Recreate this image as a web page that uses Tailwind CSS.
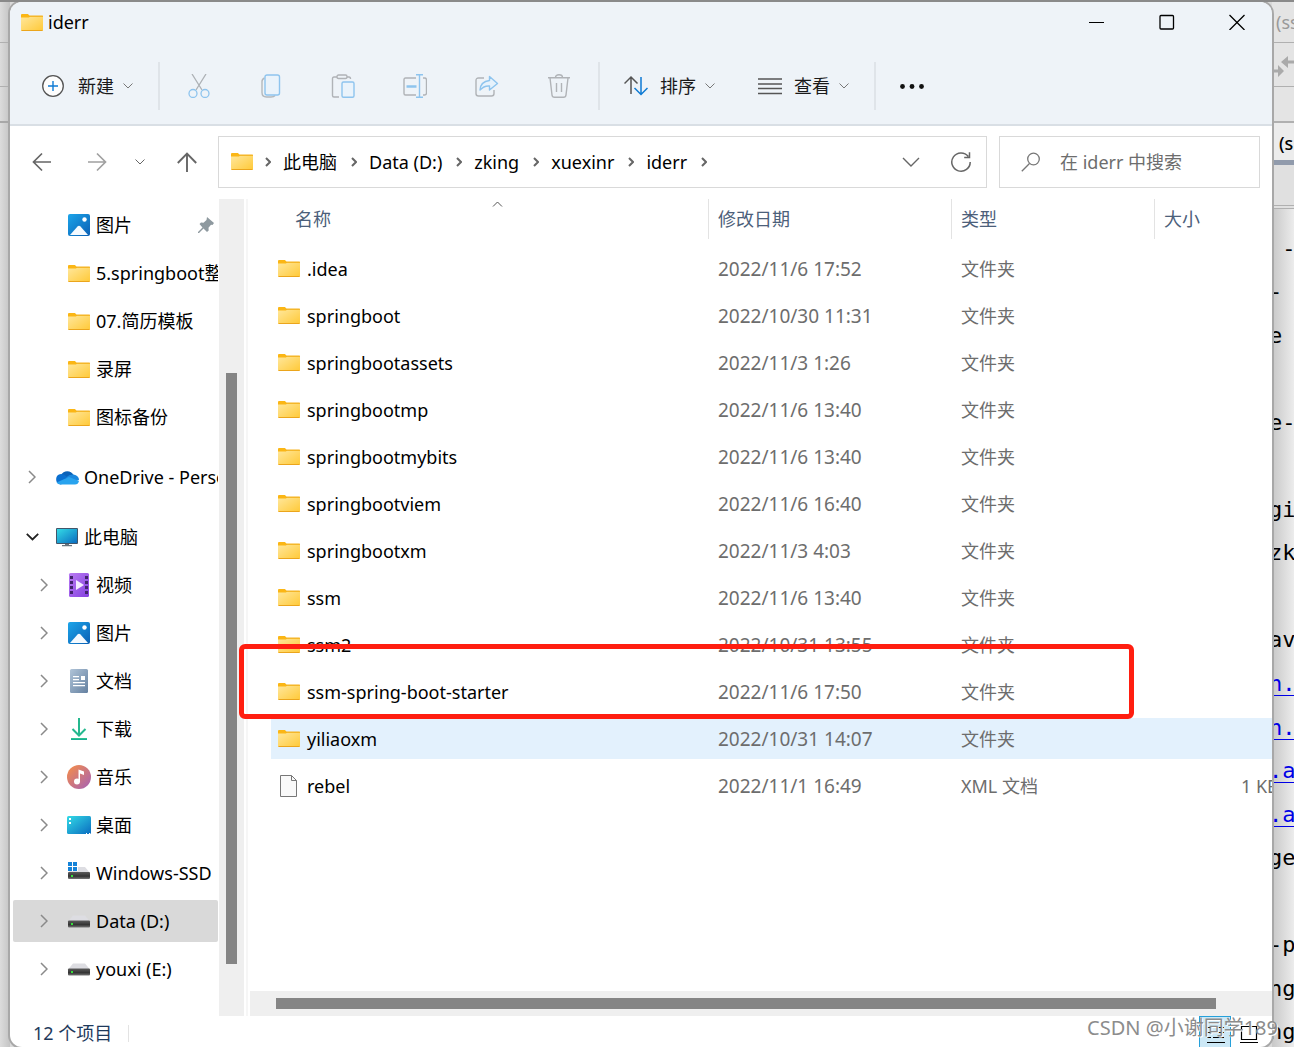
<!DOCTYPE html>
<html lang="zh-CN">
<head>
<meta charset="utf-8">
<meta name="viewport" content="width=device-width, initial-scale=1">
<title>iderr</title>
<script src="https://cdn.jsdelivr.net/npm/@tailwindcss/browser@4"></script>
</head>
<body class="relative flex min-h-screen overflow-hidden border-t-2 border-[#8a8a8a] bg-[#d9d9d9] font-['Noto_Sans','Noto_Sans_CJK_SC',sans-serif] text-lg leading-6 text-black">

<svg class="absolute size-0" aria-hidden="true">
  <defs>
    <linearGradient id="gFolder" x1="0" y1="0" x2="1" y2="1"><stop offset="0" stop-color="#ffe79c"/><stop offset="1" stop-color="#ffc937"/></linearGradient>
    <linearGradient id="gBlue" x1="0" y1="0" x2="1" y2="1"><stop offset="0" stop-color="#1ca5ea"/><stop offset="1" stop-color="#0a5fb4"/></linearGradient>
    <linearGradient id="gScreen" x1="0" y1="0" x2="1" y2="1"><stop offset="0" stop-color="#33dbe6"/><stop offset="1" stop-color="#0a6cc0"/></linearGradient>
    <linearGradient id="gPurple" x1="0" y1="0" x2="1" y2="1"><stop offset="0" stop-color="#b97bf2"/><stop offset="1" stop-color="#8440e0"/></linearGradient>
    <linearGradient id="gDoc" x1="0" y1="0" x2="1" y2="1"><stop offset="0" stop-color="#b0c4d8"/><stop offset="1" stop-color="#6480a0"/></linearGradient>
    <linearGradient id="gMusic" x1="0" y1="0" x2="1" y2="1"><stop offset="0.1" stop-color="#f08a50"/><stop offset="1" stop-color="#a460b8"/></linearGradient>
    <linearGradient id="gDown" x1="0" y1="0" x2="0" y2="1"><stop offset="0" stop-color="#35cf8c"/><stop offset="1" stop-color="#12a095"/></linearGradient>
    <linearGradient id="gDisk" x1="0" y1="0" x2="0" y2="1"><stop offset="0" stop-color="#5c5c5c"/><stop offset="0.6" stop-color="#333"/><stop offset="1" stop-color="#777"/></linearGradient>
  </defs>
  <symbol id="folder" viewBox="0 0 22 17"><path d="M0 1q0-1 1-1h6l1.500 1.700H21q1 0 1 1V5H0z" fill="#fbb615"/><path d="M0 3.600h8L9 2.500h13V16q0 1-1 1H1q-1 0-1-1z" fill="url(#gFolder)"/><path d="M8 2.200h14" stroke="#f0ae1e"/><path d="M.5 16.500h21" stroke="#eba51c"/></symbol>
  <symbol id="picture" viewBox="0 0 24 24"><rect x="1" y="1" width="22" height="22" rx="2" fill="url(#gBlue)"/><circle cx="17.500" cy="6.500" r="2.200" fill="#fff"/><path d="M3 22l7.500-8.500q1.500-1.500 3 0L21 22z" fill="#f4faff"/></symbol>
  <symbol id="cloud" viewBox="0 0 24 24"><path d="M6 10a7 7 0 0 1 12.500 0L13 14z" fill="#0b62b8"/><path d="M5.500 19.500A5.300 5.300 0 0 1 6 9q3 0 5 2l6 5z" fill="#0a6fd0"/><path d="M11 12.500q3-3.200 7.500-3 5.500 1 5.500 5.500l-6 2z" fill="#1a87dd"/><path d="M1.500 17.500L14 12l10 4q-.8 3.500-4 3.500H5.500q-2.500 0-4-2z" fill="#28a3ee"/></symbol>
  <symbol id="computer" viewBox="0 0 24 24"><path d="M10 18h4v2h3v1.300H7V20h3z" fill="#68747e"/><rect x="1" y="3" width="22" height="16" rx="1" fill="#41566b"/><rect x="2" y="4" width="20" height="14" fill="url(#gScreen)"/></symbol>
  <symbol id="video" viewBox="0 0 24 24"><rect x="2" y="0" width="20" height="24" rx="1.500" fill="url(#gPurple)"/><path d="M4.500 3v19M19.500 3v19" stroke="#42246c" stroke-width="3" stroke-dasharray="3 2"/><path d="M9 7l8 5-8 5z" fill="#f4ecff"/></symbol>
  <symbol id="document" viewBox="0 0 24 24"><rect x="3" y="0" width="18" height="24" rx="1.500" fill="url(#gDoc)"/><path d="M6 7.700h6M6 10.700h6M6 13.700h12M6 16.700h12" stroke="#fff" stroke-width="1.200"/><path d="M14 7h4v4h-4z" fill="#fff"/></symbol>
  <symbol id="download" viewBox="0 0 24 24"><path d="M12 1v17M5.500 12l6.500 6.500 6.500-6.500" fill="none" stroke="#25b88e" stroke-width="2"/><path d="M4 21h16v2H4z" fill="url(#gDown)"/></symbol>
  <symbol id="music" viewBox="0 0 24 24"><circle cx="12" cy="12" r="12" fill="url(#gMusic)"/><circle cx="10" cy="16.500" r="3" fill="#fff"/><path d="M11.500 17V4.500l5.500 2V10l-4-1.500V17z" fill="#fff"/></symbol>
  <symbol id="desktop" viewBox="0 0 24 24"><rect x="0" y="3" width="24" height="18" rx="1.500" fill="url(#gScreen)"/><path d="M2 5h2v2H2zM2 9h2v2H2z" fill="#fff"/><path d="M19 20.500h1M22 20.500h1" stroke="#fff"/></symbol>
  <symbol id="disk" viewBox="0 0 24 24"><path d="M6 6.500h12l5 6H1z" fill="#dddde2"/><rect x="1" y="11.500" width="22" height="7" rx="1" fill="url(#gDisk)"/><path d="M4 14h2v2H4z" fill="#35e03a"/></symbol>
  <symbol id="windisk" viewBox="0 0 24 24"><path d="M6 6h12l5 6H1z" fill="#dddde2"/><rect x="1" y="11" width="22" height="7" rx="1" fill="url(#gDisk)"/><path d="M4 14h2v2H4z" fill="#35e03a"/><path d="M0 0h11v10H0z" fill="#fff"/><path d="M1 1h4v4H1zM6 1h4v4H6zM1 6h4v4H1zM6 6h4v4H6z" fill="#1583d8"/></symbol>
  <symbol id="file" viewBox="0 0 22 24"><path d="M2.500 1.500h11l5 5v16h-16z" fill="#f9f9f9" stroke="#777"/><path d="M13.500 1.500v5h5" fill="none" stroke="#777"/></symbol>
  <symbol id="down" viewBox="0 0 10 6"><path d="M.5.5L5 5 9.500.5" fill="none" stroke="currentColor"/></symbol>
  <symbol id="right" viewBox="0 0 8 14"><path d="M1 1l6 6-6 6" fill="none" stroke="currentColor" stroke-width="1.500"/></symbol>
  <symbol id="crumb" viewBox="0 0 6 10"><path d="M1 1l4 4-4 4" fill="none" stroke="currentColor" stroke-width="2"/></symbol>
</svg>

<!-- editor behind the window, left edge -->
<div class="w-[10px] shrink-0 bg-linear-to-r from-[#dcdcdc] to-[#c4c4c4]" aria-hidden="true">
  <div class="h-[41px] border-b border-[#b0b0b0]"></div>
  <div class="h-11 border-b border-[#b0b0b0]"></div>
  <div class="h-9 border-b-2 border-[#a8a8a8]"></div>
  <div class="mt-[93px] ml-2 h-[13px] bg-[#555]"></div>
</div>

<!-- explorer window -->
<main class="relative z-10 flex min-w-0 flex-1 flex-col rounded-xl bg-white shadow-[0_0_0_2px_#a8a8a8]">
  <header class="rounded-t-xl border-b-2 border-[#d9dfe5] bg-[#eef3f8]">
    <div class="flex h-10 items-center">
      <svg class="ml-[11px] h-[17px] w-[22px]"><use href="#folder"/></svg>
      <h1 class="ml-[5px] flex-1">iderr</h1>
      <button class="flex h-10 w-[70px] items-center justify-center" aria-label="最小化"><svg class="size-4" viewBox="0 0 16 16"><path d="M0 8.500h15" stroke="#000"/></svg></button>
      <button class="flex h-10 w-[70px] items-center justify-center" aria-label="最大化"><svg class="size-4" viewBox="0 0 16 16"><rect x="1" y="1.500" width="13.500" height="13.500" rx="1" fill="none" stroke="#000" stroke-width="1.300"/></svg></button>
      <button class="flex h-10 w-[70px] items-center justify-center" aria-label="关闭"><svg class="size-4" viewBox="0 0 16 16"><path d="M.5 1l15 15M15.500 1l-15 15" stroke="#000" stroke-width="1.300"/></svg></button>
    </div>
    <div class="flex h-[82px] items-center pt-[6px] text-[#1a1a1a]">
      <button class="flex w-[148px] items-center pl-8">
        <svg class="size-[22px]" viewBox="0 0 22 22"><circle cx="11" cy="11" r="10.300" fill="#fdfdfd" stroke="#555" stroke-width="1.300"/><path d="M11 6v10M6 11h10" stroke="#0e7ad3" stroke-width="1.400"/></svg>
        <span class="ml-[14px]">新建</span><svg class="ml-[9px] h-[6px] w-[10px] text-[#777]"><use href="#down"/></svg>
      </button>
      <span class="h-12 w-[2px] bg-[#dfe4e9]"></span>
      <div class="mx-[3px] flex">
        <button class="flex w-[72px] justify-center" aria-label="剪切"><svg class="size-6" viewBox="0 0 24 24" fill="none" stroke-width="1.300"><path d="M5 0l10 16M19 0L9 16" stroke="#adb1b5"/><circle cx="6" cy="19.500" r="4" stroke="#8ec4ee"/><circle cx="18" cy="19.500" r="4" stroke="#8ec4ee"/></svg></button>
        <button class="flex w-[72px] justify-center" aria-label="复制"><svg class="size-6" viewBox="0 0 24 24" fill="none" stroke-width="1.400"><path d="M5.500 4q-2.500 1-2.500 3.500v11q0 4.500 4.500 4.500H12q3 0 4-1.500" stroke="#b4b8bc"/><rect x="6" y="1" width="14.500" height="20" rx="2" fill="#eaf3fb" stroke="#8ec4ee"/></svg></button>
        <button class="flex w-[72px] justify-center" aria-label="粘贴"><svg class="size-6" viewBox="0 0 24 24" fill="none" stroke-width="1.400"><path d="M6 3H3q-1.500 0-1.500 1.500v17Q1.500 23 3 23h5M16 3h2q1.500 0 1.500 2" stroke="#b0b3b7"/><rect x="6" y="1" width="10" height="3.500" rx="1.500" stroke="#b0b3b7"/><rect x="11" y="8" width="12" height="15.300" rx="1.500" fill="#eaf3fb" stroke="#8ec4ee"/></svg></button>
        <button class="flex w-[72px] justify-center" aria-label="重命名"><svg class="size-6" viewBox="0 0 24 24" fill="none" stroke-width="1.400"><path d="M13 4H2.500Q1 4 1 5.500v14Q1 21 2.500 21H13M20 4h1.500Q23.500 4 23.500 6v13q0 2-2 2H20" stroke="#b0b3b7"/><path d="M3.500 12.500h10" stroke="#8ec4ee" stroke-width="2.500"/><path d="M16.500 1v22.500M13 .800h7M13 23.200h7" stroke="#8ec4ee"/></svg></button>
        <button class="flex w-[72px] justify-center" aria-label="共享"><svg class="size-6" viewBox="0 0 24 24" fill="none" stroke-width="1.400"><path d="M9 4H3.500Q1 4 1 6.500v13Q1 22 3.500 22h13q2.500 0 2.500-2.500V16" stroke="#b0b3b7"/><path d="M14.500 2.500l8 7-8 6.500v-4Q9 11.500 5 16 5.500 7.500 14.500 6.500z" fill="#e6f2fc" stroke="#8ec4ee" stroke-linejoin="round"/></svg></button>
        <button class="flex w-[72px] justify-center" aria-label="删除"><svg class="size-6" viewBox="0 0 24 24" fill="none" stroke="#b0b3b7" stroke-width="1.400"><path d="M1 3.700h22M8.500 3.500q0-2.700 3.500-2.700t3.500 2.700M3 4l2 17q.2 2.300 2.500 2.300h9q2.300 0 2.500-2.300L21 4M9.500 9v9M14.500 9v9"/></svg></button>
      </div>
      <span class="h-12 w-[2px] bg-[#dfe4e9]"></span>
      <button class="ml-6 flex w-[134px] items-center">
        <svg class="size-6" viewBox="0 0 24 24" fill="none" stroke-width="1.500"><path d="M7 20V3M.5 9.500L7 3l6.500 6.500" stroke="#555"/><path d="M17 3v17.500M10.500 14l6.500 6.500 6.500-6.500" stroke="#0e7ad3"/></svg>
        <span class="ml-3">排序</span><svg class="ml-[9px] h-[6px] w-[10px] text-[#777]"><use href="#down"/></svg>
      </button>
      <button class="flex w-[116px] items-center">
        <svg class="size-6" viewBox="0 0 24 24"><path d="M0 5h24M0 10h24M0 14.500h24M0 19.500h24" stroke="#555" stroke-width="1.300"/></svg>
        <span class="ml-3">查看</span><svg class="ml-[9px] h-[6px] w-[10px] text-[#777]"><use href="#down"/></svg>
      </button>
      <span class="h-12 w-[2px] bg-[#dfe4e9]"></span>
      <button class="ml-6" aria-label="更多"><svg class="size-6" viewBox="0 0 24 24" fill="#111"><circle cx="2.500" cy="12.500" r="2.400"/><circle cx="12" cy="12.500" r="2.400"/><circle cx="21.500" cy="12.500" r="2.400"/></svg></button>
    </div>
  </header>

  <nav class="flex items-center py-[10px] pr-3 text-[#666]">
    <button class="ml-[22px]" aria-label="后退"><svg class="size-5" viewBox="0 0 20 20"><path d="M19 10H2M10 1.500L1.500 10l8.500 8.500" fill="none" stroke="currentColor" stroke-width="1.700"/></svg></button>
    <button class="ml-[35px] text-[#a0a0a0]" aria-label="前进"><svg class="size-5" viewBox="0 0 20 20"><path d="M1 10h17M10 1.500l8.500 8.500-8.500 8.500" fill="none" stroke="currentColor" stroke-width="1.700"/></svg></button>
    <button class="ml-7" aria-label="最近位置"><svg class="h-[6px] w-[10px]"><use href="#down"/></svg></button>
    <button class="ml-8" aria-label="向上"><svg class="size-5" viewBox="0 0 20 20"><path d="M10 20V2M.8 11L10 1.500l9.200 9.500" fill="none" stroke="currentColor" stroke-width="1.900"/></svg></button>
    <div class="ml-[21px] flex h-[52px] flex-1 items-center gap-3 border border-[#d9d9d9] px-3 pb-px text-[#666]">
      <svg class="h-[17px] w-[22px]"><use href="#folder"/></svg>
      <svg class="h-[10px] w-[6px]"><use href="#crumb"/></svg>
      <a href="#" class="mr-[2px] text-black">此电脑</a><svg class="h-[10px] w-[6px]"><use href="#crumb"/></svg>
      <a href="#" class="mr-[2px] text-black">Data (D:)</a><svg class="h-[10px] w-[6px]"><use href="#crumb"/></svg>
      <a href="#" class="mr-[2px] text-black">zking</a><svg class="h-[10px] w-[6px]"><use href="#crumb"/></svg>
      <a href="#" class="mr-[2px] text-black">xuexinr</a><svg class="h-[10px] w-[6px]"><use href="#crumb"/></svg>
      <a href="#" class="mr-[2px] text-black">iderr</a><svg class="h-[10px] w-[6px]"><use href="#crumb"/></svg>
      <button class="ml-auto" aria-label="历史记录"><svg class="h-[10px] w-[18px]" viewBox="0 0 18 10"><path d="M1 1l8 8 8-8" fill="none" stroke="currentColor" stroke-width="1.400"/></svg></button>
      <button class="mr-[2px] ml-[18px]" aria-label="刷新"><svg class="size-[22px]" viewBox="0 0 22 22" fill="none" stroke="currentColor" stroke-width="1.500"><path d="M18.300 5.500A9.200 9.200 0 1 0 20.200 11M19.500 1.200v5.300h-5.300"/></svg></button>
    </div>
    <label class="ml-3 flex h-[52px] w-[261px] items-center border border-[#d9d9d9] pl-[21px]">
      <svg class="size-5" viewBox="0 0 20 20" fill="none" stroke="#777" stroke-width="1.300"><circle cx="12.500" cy="7" r="5.800"/><path d="M8.500 11.500L.8 19.200"/></svg>
      <input type="search" aria-label="搜索" placeholder="在 iderr 中搜索" class="ml-[19px] w-0 flex-1 outline-none placeholder:text-[#6d6d6d]">
    </label>
  </nav>

  <div class="mt-px flex min-h-0 flex-1">
    <aside class="w-[209px] shrink-0 overflow-hidden pt-[3px]"><ul id="tree" class="-mt-px flex flex-col"></ul></aside>
    <div class="w-[25px] shrink-0 bg-[#efefef] pt-[174px]"><div class="ml-[7px] h-[591px] w-[11px] bg-[#858585]"></div></div>
    <div class="ml-[2px] w-[2px] shrink-0 bg-[#f6f6f6]"></div>
    <section class="ml-[2px] flex min-w-0 flex-1 flex-col overflow-hidden">
      <table class="w-full table-fixed border-collapse text-left">
        <colgroup><col class="w-[458px]"><col class="w-[243px]"><col class="w-[203px]"><col></colgroup>
        <thead class="text-[#4c607a]">
          <tr class="h-[46px] align-top">
            <th class="relative p-0 font-normal"><div class="flex h-10 items-center pl-[45px]">名称</div><svg class="absolute top-[2px] left-[242px] h-[6px] w-[11px] rotate-180 text-[#555]"><use href="#down"/></svg></th>
            <th class="p-0 font-normal"><div class="flex h-10 items-center border-l border-[#e3e3e3] pl-[9px]">修改日期</div></th>
            <th class="p-0 font-normal"><div class="flex h-10 items-center border-l border-[#e3e3e3] pl-[9px]">类型</div></th>
            <th class="p-0 font-normal"><div class="flex h-10 items-center border-l border-[#e3e3e3] pl-[9px]">大小</div></th>
          </tr>
        </thead>
        <tbody id="files" class="text-[#6d6d6d]"></tbody>
      </table>
      <div class="mt-auto h-[25px] bg-[#efefef] pt-[7px] pr-14 pl-[26px]"><div class="h-[11px] bg-[#858585]"></div></div>
    </section>
  </div>

  <footer class="flex h-[31px] items-start pl-[23px] text-[#1e395b]">
    <span class="mt-[5px]">12 个项目</span>
    <span class="mt-[9px] ml-4 h-[17px] w-px bg-[#e3e3e3]"></span>
    <button class="ml-auto h-[31px] w-8 border border-b-0 border-[#26a0da] bg-[#cce8f6] pt-1 pl-[6px]" aria-label="详细信息"><svg class="h-6 w-5" viewBox="0 0 20 24"><path d="M1 5.500h4M7 5.500h11M1 10.500h4M7 10.500h11M1 15.500h4M7 15.500h11M1 20.500h18" stroke="#000"/></svg></button>
    <button class="mr-[13px] ml-2 h-[31px] w-5 pt-1" aria-label="大图标"><svg class="h-6 w-5" viewBox="0 0 20 24"><path d="M2.500 4.500h15v13h-15zM1 20.500h18" fill="none" stroke="#000" stroke-width="1.200"/></svg></button>
  </footer>

  <!-- highlight round the starter project -->
  <div class="pointer-events-none absolute top-[642px] right-[138px] left-[229px] h-[75px] rounded-md border-5 border-[#ff1e10]"></div>
</main>

<!-- editor behind the window, right edge -->
<div class="w-[22px] shrink-0 overflow-hidden whitespace-nowrap bg-linear-to-r from-[#c8c8c8] to-[#ececec]" aria-hidden="true">
  <div class="h-[41px] border-b border-[#b0b0b0] bg-[#e4e4e4] pt-2 pl-1 text-[#999]">(ss</div>
  <div class="h-11 border-b border-[#b0b0b0] bg-[#e4e4e4] pt-3"><svg class="h-6 w-[22px]" viewBox="0 0 22 24" fill="#aaa"><path d="M9 7l7-6v4.500h7v3h-7V13zM12 16l-6-6v4.500H0v3h6V22z"/></svg></div>
  <div class="h-9 border-b-2 border-[#b0b0b0] bg-[#e4e4e4]"></div>
  <div class="h-[42px] border-b-5 border-[#919bac] bg-[#ececec] pt-2 pl-[7px] font-medium text-black">(s</div>
  <div class="h-11 border-b-4 border-double border-[#b0b0b0] bg-[#e0e0e0]"></div>
  <div id="code" class="mt-[18px] -mb-2 -ml-[3px] grid h-[827px] auto-rows-fr items-center font-['DejaVu_Sans_Mono',monospace] text-[22px]"></div>
</div>

<div class="pointer-events-none absolute right-4 bottom-[7px] z-20 text-xl leading-6 text-[#8c8c8c] [text-shadow:1px_1px_0_#fff]">CSDN @小谢同学189</div>

<script>
const tree = [
  ['picture', '图片', 2, 'pin'], ['folder', '5.springboot整合', 2], ['folder', '07.简历模板', 2], ['folder', '录屏', 2], ['folder', '图标备份', 2],
  ['cloud', 'OneDrive - Personal', 0], ['computer', '此电脑', 0, 'open'],
  ['video', '视频', 1], ['picture', '图片', 1], ['document', '文档', 1], ['download', '下载', 1], ['music', '音乐', 1], ['desktop', '桌面', 1],
  ['windisk', 'Windows-SSD', 1], ['disk', 'Data (D:)', 1, 'selected'], ['disk', 'youxi (E:)', 1]
];
const pin = '<svg class="absolute right-[4px] size-4" viewBox="0 0 16 16" fill="#8e999f"><path d="M9 0l7 6-1.500 2-1.500-.2-2.500 3 .2 2.700L9 15l-3.500-3.500L1 16H0v-1l4.500-4.500L1.500 7 3 5.500l2.500.3L8.500 3z"/></svg>';
document.getElementById('tree').innerHTML = tree.map(([icon, name, level, state]) => {
  const gap = level === 0 ? 'mt-[15px]' : 'mt-[3px]';
  const pad = level === 0 ? 'pl-[15px]' : 'pl-[27px]';
  const bg = state === 'selected' ? 'bg-[#d9d9d9]' : '';
  const arrow = state === 'open' ? '<svg class="-ml-[2px] h-[8px] w-[13px] text-[#222]" viewBox="0 0 13 8"><path d="M.8.8l5.700 5.700L12.200.8" fill="none" stroke="currentColor" stroke-width="1.800"/></svg>'
    : level === 2 ? '' : '<svg class="h-[14px] w-[8px] text-[#8a8a8a]"><use href="#right"/></svg>';
  const size = icon === 'folder' ? 'h-[17px] w-[22px] mx-px' : 'size-6';
  return `<li class="${gap} mb-[3px] ml-[3px] mr-px"><a href="#" class="relative flex h-[42px] items-center overflow-hidden rounded-xs whitespace-nowrap ${pad} ${bg}"><span class="flex w-[27px] shrink-0">${arrow}</span><svg class="${size} shrink-0"><use href="#${icon}"/></svg><span class="ml-[5px]">${name}</span>${state === 'pin' ? pin : ''}</a></li>`;
}).join('');

const files = [
  ['.idea', '2022/11/6 17:52'], ['springboot', '2022/10/30 11:31'], ['springbootassets', '2022/11/3 1:26'], ['springbootmp', '2022/11/6 13:40'],
  ['springbootmybits', '2022/11/6 13:40'], ['springbootviem', '2022/11/6 16:40'], ['springbootxm', '2022/11/3 4:03'], ['ssm', '2022/11/6 13:40'],
  ['ssm2', '2022/10/31 13:55'], ['ssm-spring-boot-starter', '2022/11/6 17:50'], ['yiliaoxm', '2022/10/31 14:07'], ['rebel', '2022/11/1 16:49', 'XML 文档', '1 KB']
];
document.getElementById('files').innerHTML = files.map(([name, date, type = '文件夹', size = '']) => {
  const bg = name === 'yiliaoxm' ? 'bg-[#e3f1fd]' : '';
  const icon = size ? '<svg class="h-6 w-[22px]"><use href="#file"/></svg>' : '<svg class="h-[17px] w-[22px]"><use href="#folder"/></svg>';
  return `<tr class="h-[47px]"><td class="p-0"><div class="ml-[21px] flex h-[41px] items-center gap-[7px] pl-[7px] text-black ${bg}">${icon}${name}</div></td>
    <td class="p-0"><div class="flex h-[41px] items-center pl-[10px] text-[19px] ${bg}">${date}</div></td>
    <td class="p-0"><div class="flex h-[41px] items-center pl-[10px] ${bg}">${type}</div></td>
    <td class="p-0"><div class="flex h-[41px] items-center overflow-hidden pl-[87px] whitespace-nowrap ${bg}">${size}</div></td></tr>`;
}).join('');

const code = [' -', '-', 'e', '', 'e-', '', 'gi', 'zk', '', 'av', 'n.', 'n.', '.a', '.a', 'ge', '', '-p', 'ng', 'ng'];
document.getElementById('code').innerHTML = code.map((t, i) =>
  `<span class="${i > 9 && i < 14 ? 'text-[#0000e6] underline decoration-1 underline-offset-4' : ''} whitespace-pre">${t}</span>`).join('');
</script>
</body>
</html>
